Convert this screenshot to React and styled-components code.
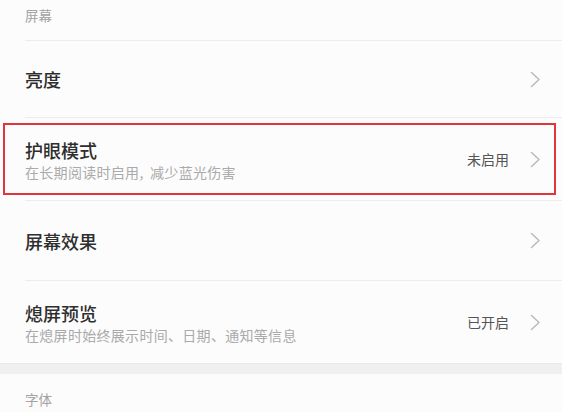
import React from 'react'
import styled, { createGlobalStyle } from 'styled-components'

const GlobalStyle = createGlobalStyle`
  html, body {
    margin: 0;
    padding: 0;
    background: #fcfcfc;
  }
  body {
    font-family: "Noto Sans CJK SC", "Noto Sans", sans-serif;
  }
`

const settings = [
  { title: '亮度', height: 77 },
  { title: '护眼模式', sub: '在长期阅读时启用, 减少蓝光伤害', value: '未启用', height: 83, highlight: true },
  { title: '屏幕效果', height: 80 },
  { title: '熄屏预览', sub: '在熄屏时始终展示时间、日期、通知等信息', value: '已开启', height: 82, last: true }
]

const Chevron = () => (
  <svg width="11" height="17" viewBox="0 0 11 17" fill="none">
    <path d="M1.5 1.5 L9 8.5 L1.5 15.5" stroke="#b8b8b8" strokeWidth="1.4" strokeLinecap="round" strokeLinejoin="round" />
  </svg>
)

export default function App() {
  return (
    <Page>
      <GlobalStyle />
      <SectionHeader top={7} h={40}>屏幕</SectionHeader>
      <Group>
        {settings.map(item => (
          <Row key={item.title} h={item.height} last={item.last}>
            {item.highlight && <Highlight />}
            <Texts>
              <Title>{item.title}</Title>
              {item.sub && <Sub>{item.sub}</Sub>}
            </Texts>
            <Right>
              {item.value && <Value>{item.value}</Value>}
              <Chevron />
            </Right>
          </Row>
        ))}
      </Group>
      <Gap />
      <SectionHeader top={17} h={38}>字体</SectionHeader>
    </Page>
  )
}

const Page = styled.div`
  width: 562px;
  height: 412px;
  overflow: hidden;
  background: #fcfcfc;
`

const SectionHeader = styled.div`
  height: ${p => p.h}px;
  box-sizing: border-box;
  padding: ${p => p.top}px 25px 0;
  font-size: 13.5px;
  color: #a3a3a3;
  line-height: 16px;
`

const Group = styled.div`
  border-top: 1px solid #ececec;
  margin-left: 25px;
`

const Row = styled.div`
  position: relative;
  height: ${p => p.h}px;
  box-sizing: border-box;
  display: flex;
  align-items: center;
  justify-content: space-between;
  padding-right: 21px;
  border-bottom: ${p => (p.last ? 'none' : '1px solid #ececec')};
`

const Highlight = styled.div`
  position: absolute;
  left: -22px;
  right: 6px;
  top: 5px;
  bottom: 5px;
  border: 2.5px solid #e0353b;
  pointer-events: none;
`

const Texts = styled.div`
  display: flex;
  flex-direction: column;
  gap: 1px;
`

const Title = styled.div`
  font-size: 18px;
  line-height: 24px;
  color: #2e2e2e;
  font-weight: 500;
`

const Sub = styled.div`
  font-size: 14px;
  line-height: 18px;
  color: #aaaaaa;
  letter-spacing: 0.3px;
  word-spacing: 3px;
`

const Right = styled.div`
  display: flex;
  align-items: center;
  gap: 21px;
`

const Value = styled.div`
  font-size: 14px;
  color: #555555;
`

const Gap = styled.div`
  height: 10px;
  background: #f0f0f0;
  border-top: 1px solid #e8e8e8;
`
